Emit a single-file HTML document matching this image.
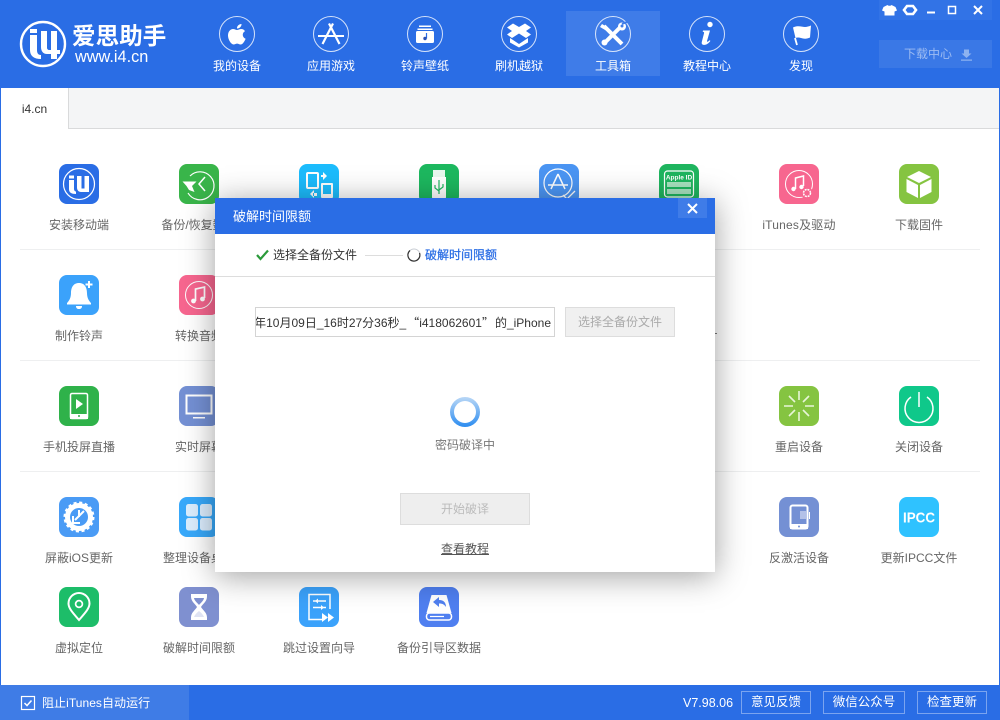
<!DOCTYPE html>
<html lang="zh-CN"><head><meta charset="utf-8"><title>爱思助手</title>
<style>
*{box-sizing:border-box}
html,body{margin:0;padding:0;width:1000px;height:720px;overflow:hidden;background:#fff}
body{position:relative;font-family:"Liberation Sans","Noto Sans CJK SC",sans-serif;font-size:12px;color:#666}
.a{position:absolute}
.l{position:absolute;width:120px;text-align:center;line-height:16px;color:#666;white-space:nowrap}
.n{position:absolute;width:94px;text-align:center;top:58px;line-height:16px;color:#fff}
.line{position:absolute;left:20px;width:960px;height:1px;background:#eeeff0}
.fb{position:absolute;top:691px;height:23px;border:1px solid rgba(255,255,255,.38);color:#fff;text-align:center;line-height:21px;font-size:12.5px}
</style></head><body>
<div class="a" style="left:0;top:0;width:1000px;height:88px;background:#2a6de5"></div>
<div class="a" style="left:566px;top:11px;width:94px;height:65px;background:#3f7ce8"></div>
<div class="a" style="left:0;top:88px;width:1000px;height:41px;background:#f4f5f6;border-bottom:1px solid #d9dadb"></div>
<div class="a" style="left:1px;top:88px;width:68px;height:41px;background:#fff;border-right:1px solid #d9dadb;text-align:center;line-height:42px;color:#333;font-size:12px">i4.cn</div>
<div class="a" style="left:0;top:88px;width:1px;height:597px;background:#2a6de5"></div>
<div class="a" style="left:999px;top:88px;width:1px;height:597px;background:#2a6de5"></div>

<!-- logo -->
<svg class="a" style="left:0;top:0" width="1000" height="88" viewBox="0 0 1000 88" fill="none">
<circle cx="43" cy="44" r="22" stroke="#fff" stroke-width="2.4"/>
<path d="M30 29h7v4h-7z M30 35h7v15c0 3 1 5 4 5v4c-7 0-11-3-11-9z M41 31h6v17c0 1 1 2 2 2h2V31h6v19h3v4h-3v5h-6v-5h-4c-4 0-6-3-6-7z" fill="#fff"/>
<g stroke="#fff" stroke-opacity=".8" stroke-width="1">
<circle cx="237" cy="34" r="17.5"/><circle cx="331" cy="34" r="17.5"/><circle cx="425" cy="34" r="17.5"/><circle cx="519" cy="34" r="17.5"/><circle cx="613" cy="34" r="17.5"/><circle cx="707" cy="34" r="17.5"/><circle cx="801" cy="34" r="17.5"/>
</g>
<!-- apple -->
<path d="M241.500 24c.2 2.300-2 4.700-4.500 4.500-.3-2.300 2.100-4.600 4.500-4.500z M237 30c1.300 0 2.500-1 4.200-1 1.500 0 3 .8 3.800 2.100-3.300 1.900-2.800 6.300.6 7.600-.9 2.400-2.900 5.800-5 5.800-1.300 0-2-.9-3.500-.9s-2.300.9-3.500.9c-2.500 0-5.600-5-5.600-9 0-4 2.500-6.500 5-6.500 1.500 0 2.900 1 4 1z" fill="#fff"/>
<!-- app store -->
<path d="M333 23.500l-10.500 20.500 M329 23.500l10.500 20.500" stroke="#fff" stroke-width="2.200"/>
<path d="M318 36h26" stroke="#fff" stroke-width="2"/>
<!-- ringtone -->
<path d="M419 25.500h12v1.500h-12z M417.500 28.500h15v1.500h-15z" fill="#fff"/><rect x="416" y="31" width="18" height="12" rx="1.500" fill="#fff"/>
<path d="M426.500 33v5.500" stroke="#2a6de5" stroke-width="1.200"/><circle cx="425" cy="38.500" r="1.700" fill="#2a50b5"/>
<!-- box -->
<path d="M513 23.500l6 3.500 6-3.500 6 4-5 3.500 5 3.500-5 3.500-7-4.500-7 4.500-5-3.500 5-3.500-5-3.500z" fill="#fff"/>
<path d="M510 38l9 6 9-6v4.500l-9 5-9-5z" fill="#fff"/>
<!-- tools -->
<path d="M604 26l18 18" stroke="#fff" stroke-width="4"/><path d="M622.500 25l-18.500 18.500" stroke="#fff" stroke-width="4"/>
<circle cx="622" cy="26.500" r="4" fill="#fff"/><path d="M602 24l6 3.500-2 3-6-3.500z" fill="#fff"/><circle cx="604.500" cy="42.500" r="3" fill="#fff"/><circle cx="622" cy="26" r="1.500" fill="#3f7ce8"/><path d="M622 24l5-2" stroke="#3f7ce8" stroke-width="2"/>
<!-- info -->
<circle cx="710" cy="24.500" r="2.700" fill="#fff"/>
<path d="M703 30.500h7l-3 10.500c-.2 1 .8 1.200 2.500-.8l.9.700c-2 3-4.500 4.200-6.700 4-2-.2-2.300-1.700-1.800-3.400l2.200-8.500c.2-1-.4-1.200-1.400-1.300z" fill="#fff"/>
<!-- flag -->
<path d="M793 27.500c5-2.500 9-.5 12-.5 2 0 4-.7 6-1.500l-1 12c-3 1.500-6 1.500-9 .5-2-.7-4-.7-5.500 0z" fill="#fff"/><path d="M795 38l2 7" stroke="#fff" stroke-width="1.800"/>
<!-- window controls -->
<rect x="879" y="0" width="113" height="20" fill="#3273e6"/>
<path d="M883.500 7l4-2c1 1 3 1 4 0l4 2 1.500 3.500-2.500 1v4h-10v-4l-2.500-1z" fill="#fff"/>
<path d="M907 6h6l3 4-3 4h-6l-3-4z" fill="none" stroke="#fff" stroke-width="2.600"/>
<path d="M927 12.500h8" stroke="#fff" stroke-width="2"/>
<rect x="948.500" y="6.500" width="7" height="7" stroke="#fff" stroke-width="1.500"/>
<path d="M974 6l8 8M982 6l-8 8" stroke="#fff" stroke-width="2"/>
<rect x="879" y="40" width="113" height="28" fill="#3a78e6"/>
<path d="M964 49.500h5v4h2.500l-5 4.500-5-4.500h2.500z M961 59.500h11v1.200h-11z" fill="#8db2f0"/>
</svg>
<div class="a" style="left:72px;top:21px;font-size:23.500px;font-weight:700;color:#fff;line-height:30px;letter-spacing:.1px;white-space:nowrap">爱思助手</div>
<div class="a" style="left:75px;top:48px;font-size:16.300px;color:#fff;line-height:18px;white-space:nowrap">www.i4.cn</div>
<div class="n" style="left:190px">我的设备</div><div class="n" style="left:284px">应用游戏</div><div class="n" style="left:378px">铃声壁纸</div><div class="n" style="left:472px">刷机越狱</div><div class="n" style="left:566px">工具箱</div><div class="n" style="left:660px">教程中心</div><div class="n" style="left:754px">发现</div>
<div class="a" style="left:904px;top:46px;line-height:16px;color:#9dbcf2">下载中心</div>

<div class="line" style="top:249px"></div><div class="line" style="top:360px"></div><div class="line" style="top:471px"></div>

<!-- tool icons -->
<svg class="a" style="left:0;top:0" width="1000" height="720" viewBox="0 0 1000 720" fill="none">
<g transform="translate(59 164)"><rect width="40" height="40" rx="8" fill="#2a6de5"/><circle cx="20" cy="20" r="15.500" stroke="#fff" stroke-width="1.200"/>
<path d="M10 16h5v9c0 1.500 1 2.500 2 2.500V30c-4.500 0-7-1.300-7-5z M10 11.500h5v3h-5z M18 12h4.500v12.500h3V12H30v16h-8c-2.500 0-4-2-4-4.500z" fill="#fff"/></g>
<g transform="translate(179 164)"><rect width="40" height="40" rx="8" fill="#39b54a"/><path d="M11 12a14 14 0 1 1 -2 17" stroke="#fff" stroke-width="1.200"/><path d="M3.500 17.500h14l-4.500 4.500 2.500 6-5.500-2-2.500-4z" fill="#fff"/><path d="M26 13l-6 7 6 7" stroke="#fff" stroke-width="1.500"/></g>
<g transform="translate(299 164)"><rect width="40" height="40" rx="8" fill="#1cbcfd"/><rect x="8" y="9" width="11" height="15" rx="1" stroke="#fff" stroke-width="2"/><rect x="22" y="19" width="12" height="15" rx="1" fill="#fff"/><rect x="24" y="21" width="8" height="9" fill="#1cbcfd"/><path d="M24 8l4 4 -4 4zM22 11h3v2h-3zM15 26l-4 4 4 4zM14 29h4v3h-4z" fill="#fff"/></g>
<g transform="translate(419 164)"><rect width="40" height="40" rx="8" fill="#1db85f"/><rect x="14" y="6" width="12" height="7" fill="#fff" opacity=".9"/><path d="M13 13h14v20c0 2-2 3-3 3h-8c-1 0-3-1-3-3z" fill="#fff"/><path d="M20 16v14M16 21v3l4 3M24 20v3l-4 3" stroke="#1db85f" stroke-width="1.200"/></g>
<g transform="translate(539 164)"><rect width="40" height="40" rx="8" fill="#4b95f3"/><circle cx="19" cy="19" r="14" stroke="#fff" stroke-width="1.200"/><path d="M19 10l-7 15M19 10l7 15M9 21h20" stroke="#fff" stroke-width="1.500"/><path d="M24 31l4 4 8-8" stroke="#fff" stroke-width="1.300"/></g>
<g transform="translate(659 164)"><rect width="40" height="40" rx="8" fill="#1fb55f"/><rect x="5.500" y="7" width="29" height="26" rx="3" stroke="#fff" stroke-width="1.200"/><rect x="8" y="18" width="24" height="5" fill="#a8e2bf"/><rect x="8" y="25" width="24" height="5" fill="#a8e2bf"/><text x="20" y="15.500" font-size="6.500" font-weight="700" text-anchor="middle" fill="#fff" font-family="Liberation Sans">Apple ID</text></g>
<g transform="translate(779 164)"><rect width="40" height="40" rx="8" fill="#f7668f"/><circle cx="20" cy="20" r="13.500" stroke="#fff" stroke-width="1"/><path d="M16.500 25v-11l8-2v10" stroke="#fff" stroke-width="1.500"/><circle cx="14.500" cy="25" r="2.200" fill="#fff"/><circle cx="22.500" cy="23" r="2.200" fill="#fff"/><circle cx="28" cy="29" r="6" fill="#f7668f"/><circle cx="28" cy="29" r="3.500" stroke="#fff" stroke-width="1.500" stroke-dasharray="2 .8"/></g>
<g transform="translate(899 164)"><rect width="40" height="40" rx="8" fill="#85c441"/><path d="M20 7l12 6-12 6-12-6z M7.500 15l11.500 6v13l-11.500-6z M32.500 15l-11.500 6v13l11.500-6z" fill="#fff"/></g>

<g transform="translate(59 275)"><rect width="40" height="40" rx="8" fill="#3ba2fb"/><path d="M20 8c6 0 8 5 8 10 0 5 2 8 4 10v1.500H8V28c2-2 4-5 4-10 0-5 2-10 8-10z M17 31h6c0 2-1 3-3 3s-3-1-3-3z" fill="#fff"/><path d="M30 6v7M26.500 9.500h7" stroke="#fff" stroke-width="2"/></g>
<g transform="translate(179 275)"><rect width="40" height="40" rx="8" fill="#f7668f"/><circle cx="20" cy="20" r="13.500" stroke="#fff" stroke-width="1"/><path d="M16.500 26v-12l9-2v11" stroke="#fff" stroke-width="1.700"/><circle cx="14.500" cy="26" r="2.400" fill="#fff"/><circle cx="23.500" cy="24" r="2.400" fill="#fff"/></g>

<g transform="translate(59 386)"><rect width="40" height="40" rx="8" fill="#2fb24a"/><rect x="11.500" y="7.500" width="17" height="25" rx="1.500" stroke="#fff" stroke-width="1.500"/><path d="M11 28h18v5H11z" fill="#fff"/><circle cx="20" cy="30" r="1" fill="#2fb24a"/><path d="M17 13l7 5-7 5z" fill="#fff"/></g>
<g transform="translate(179 386)"><rect width="40" height="40" rx="8" fill="#7490d4"/><rect x="7.500" y="9.500" width="25" height="18" stroke="#fff" stroke-width="2"/><path d="M14 31h12v1.500H14z" fill="#fff"/></g>
<g transform="translate(779 386)"><rect width="40" height="40" rx="8" fill="#85c441"/><path d="M20 5v9M20 26v9M5 20h9M26 20h9M10 10l6 6M24 24l6 6M30 10l-6 6M16 24l-6 6" stroke="#e8f5d8" stroke-width="1.600"/></g>
<g transform="translate(899 386)"><rect width="40" height="40" rx="8" fill="#0fc88a"/><path d="M12 11a14 14 0 1 0 16 0" stroke="#fff" stroke-width="1.500"/><path d="M20 6v15" stroke="#fff" stroke-width="1.500"/></g>

<g transform="translate(59 497)"><rect width="40" height="40" rx="8" fill="#4a9bf5"/><circle cx="20" cy="20" r="11.500" stroke="#fff" stroke-width="5"/><circle cx="20" cy="20" r="14" stroke="#fff" stroke-width="3" stroke-dasharray="3 2.500"/><path d="M25 14l-9 9M20 13v7M14 19v7h7" stroke="#fff" stroke-width="2"/></g>
<g transform="translate(179 497)"><rect width="40" height="40" rx="8" fill="#38a9fb"/><rect x="7" y="7" width="12" height="12.500" rx="2.500" fill="#dceefe"/><rect x="21" y="7" width="12" height="12.500" rx="2.500" fill="#dceefe"/><rect x="7" y="21" width="12" height="12.500" rx="2.500" fill="#dceefe"/><rect x="21" y="21" width="12" height="12.500" rx="2.500" fill="#dceefe"/></g>
<g transform="translate(779 497)"><rect width="40" height="40" rx="8" fill="#7490d4"/><rect x="11.500" y="8.500" width="17" height="23" rx="2" stroke="#fff" stroke-width="2"/><path d="M11 27h18v5H11z" fill="#fff"/><circle cx="20" cy="29.500" r="1" fill="#7490d4"/><rect x="21" y="14" width="6" height="8" fill="#b3c1e8"/><path d="M30.500 15v7" stroke="#fff"/></g>
<g transform="translate(899 497)"><rect width="40" height="40" rx="8" fill="#2fc2ff"/><text x="20" y="25.500" font-size="15" font-weight="700" text-anchor="middle" fill="#fff" font-family="Liberation Sans" textLength="32" lengthAdjust="spacingAndGlyphs">IPCC</text></g>

<g transform="translate(59 587)"><rect width="40" height="40" rx="8" fill="#1dbd69"/><path d="M20 33C13 25 9.500 21 9.500 16.500a10.500 10.500 0 0 1 21 0C30.500 21 27 25 20 33z" stroke="#fff" stroke-width="2"/><circle cx="20" cy="17" r="3.400" stroke="#fff" stroke-width="1.700"/></g>
<g transform="translate(179 587)"><rect width="40" height="40" rx="8" fill="#7f90d0"/><path d="M12 7h16v2.500c0 5-4 7-6 10.500 2 3.500 6 5.500 6 10.500V33H12v-2.500c0-5 4-7 6-10.500-2-3.500-6-5.500-6-10.500z" fill="#fff"/><path d="M15 11h10c-.5 3-3.500 5-5 7-1.500-2-4.500-4-5-7z" fill="#7f90d0"/><path d="M20 24c-2 1.500-4 3.500-5 6h10c-1-2.500-3-4.500-5-6z" fill="#dfe3f3"/></g>
<g transform="translate(299 587)"><rect width="40" height="40" rx="8" fill="#3ba2fb"/><path d="M31 22V7.500H10v25h13" stroke="#fff" stroke-width="1.500"/><path d="M14 14h13M14 20.500h13" stroke="#fff" stroke-width="1.500"/><path d="M19 11.500v5l-3-2.500zM22 18v5l3-2.500z" fill="#fff"/><path d="M23 26l6 4.500-6 4.500zM29 26l6 4.500-6 4.500z" fill="#fff"/></g>
<g transform="translate(419 587)"><rect width="40" height="40" rx="8" fill="#4f7ff0"/><path d="M12.500 8h15l5 18H7.500z" fill="#fff"/><rect x="7.500" y="26" width="25" height="7" rx="3" fill="#4f7ff0" stroke="#fff" stroke-width="1.500"/><path d="M11 29.500h14" stroke="#fff" stroke-width="1.200"/><path d="M14 15l6-5v3c5 0 7 3 7 7-2-3-4-3.500-7-3.500v3.500z" fill="#4f7ff0"/></g>
</svg>

<div class="l" style="left:19px;top:217px">安装移动端</div><div class="l" style="left:139px;top:217px">备份/恢复数据</div><div class="l" style="left:739px;top:217px;letter-spacing:.2px">iTunes及驱动</div><div class="l" style="left:859px;top:217px">下载固件</div>
<div class="l" style="left:19px;top:328px">制作铃声</div><div class="l" style="left:139px;top:328px">转换音频</div>
<div class="l" style="left:19px;top:439px">手机投屏直播</div><div class="l" style="left:139px;top:439px">实时屏幕</div><div class="l" style="left:739px;top:439px">重启设备</div><div class="l" style="left:859px;top:439px">关闭设备</div>
<div class="l" style="left:19px;top:550px">屏蔽iOS更新</div><div class="l" style="left:139px;top:550px">整理设备桌面</div><div class="l" style="left:739px;top:550px">反激活设备</div><div class="l" style="left:859px;top:550px">更新IPCC文件</div>
<div class="l" style="left:19px;top:640px">虚拟定位</div><div class="l" style="left:139px;top:640px">破解时间限额</div><div class="l" style="left:259px;top:640px">跳过设置向导</div><div class="l" style="left:379px;top:640px">备份引导区数据</div>
<div class="a" style="left:715px;top:333px;width:2px;height:1px;background:#777"></div>

<!-- footer -->
<div class="a" style="left:0;top:685px;width:1000px;height:35px;background:#2a6de5"></div>
<div class="a" style="left:0;top:685px;width:189px;height:35px;background:#3f7ce6"></div>
<svg class="a" style="left:20px;top:695px" width="16" height="16" fill="none"><rect x="1.500" y="1.500" width="13" height="13" stroke="#fff" stroke-width="1.200"/><path d="M4.500 8l2.500 2.500 4.500-5" stroke="#fff" stroke-width="1.500"/></svg>
<div class="a" style="left:42px;top:695px;line-height:16px;color:#fff;white-space:nowrap;letter-spacing:.05px">阻止iTunes自动运行</div>
<div class="a" style="left:683px;top:695px;line-height:16px;color:#fff;font-size:12.500px;white-space:nowrap">V7.98.06</div>
<div class="fb" style="left:741px;width:70px">意见反馈</div><div class="fb" style="left:823px;width:82px">微信公众号</div><div class="fb" style="left:917px;width:70px">检查更新</div>

<!-- dialog -->
<div class="a" style="left:215px;top:198px;width:500px;height:374px;background:#fff;box-shadow:0 4px 30px rgba(0,0,0,.38)">
<div class="a" style="left:0;top:0;width:500px;height:36px;background:#2a6de5;color:#fff;font-size:13px;line-height:37px;padding-left:18px">破解时间限额</div>
<div class="a" style="left:463px;top:0;width:29px;height:20px;background:#3f7ce8"></div>
<svg class="a" style="left:472px;top:5px" width="11" height="11" fill="none"><path d="M1 1l9 9M10 1l-9 9" stroke="#fff" stroke-width="2"/></svg>
<svg class="a" style="left:40px;top:50px" width="16" height="14" fill="none"><path d="M2 7l3.500 4L13 2.500" stroke="#2b9a3a" stroke-width="2.200"/></svg>
<div class="a" style="left:58px;top:49px;line-height:16px;color:#333;white-space:nowrap">选择全备份文件</div>
<div class="a" style="left:150px;top:57px;width:38px;height:1px;background:#ddd"></div>
<svg class="a" style="left:191px;top:50px" width="16" height="14" fill="none"><circle cx="8" cy="7" r="6" stroke="#c9cdd4" stroke-width="1"/><path d="M13.500 5a6 6 0 1 1-9.500-2.500" stroke="#333" stroke-width="1.200"/></svg>
<div class="a" style="left:210px;top:49px;line-height:16px;color:#2a6de5;-webkit-text-stroke:.25px #2a6de5;white-space:nowrap">破解时间限额</div>
<div class="a" style="left:0;top:78px;width:500px;height:1px;background:#ddd"></div>
<div class="a" style="left:40px;top:109px;width:300px;height:30px;border:1px solid #d4d4d4;background:#fff;overflow:hidden;display:flex;justify-content:flex-end;align-items:center;padding-right:3px;color:#333;white-space:nowrap;font-size:12px"><span style="flex:none">2018年10月09日_16时27分36秒_<span style="font-family:'Noto Sans CJK SC',sans-serif;display:inline-block;width:13px;text-align:right">“</span>i418062601<span style="font-family:'Noto Sans CJK SC',sans-serif;display:inline-block;width:13px;text-align:left">”</span>的_iPhone</span></div>
<div class="a" style="left:350px;top:109px;width:110px;height:30px;background:#f0f0f0;border:1px solid #ddd;color:#aaa;text-align:center;line-height:28px">选择全备份文件</div>
<div class="a" style="left:235px;top:199px;width:30px;height:30px;border-radius:50%;background:linear-gradient(180deg,#b9d7f6,#2c8cf0)"></div>
<div class="a" style="left:239px;top:203px;width:22px;height:22px;border-radius:50%;background:#fff"></div>
<div class="a" style="left:150px;top:239px;width:200px;text-align:center;line-height:16px;color:#777">密码破译中</div>
<div class="a" style="left:185px;top:295px;width:130px;height:32px;background:#eee;border:1px solid #ddd;color:#bbb;text-align:center;line-height:30px">开始破译</div>
<div class="a" style="left:150px;top:343px;width:200px;text-align:center;line-height:16px;color:#555;text-decoration:underline">查看教程</div>
</div>
</body></html>
